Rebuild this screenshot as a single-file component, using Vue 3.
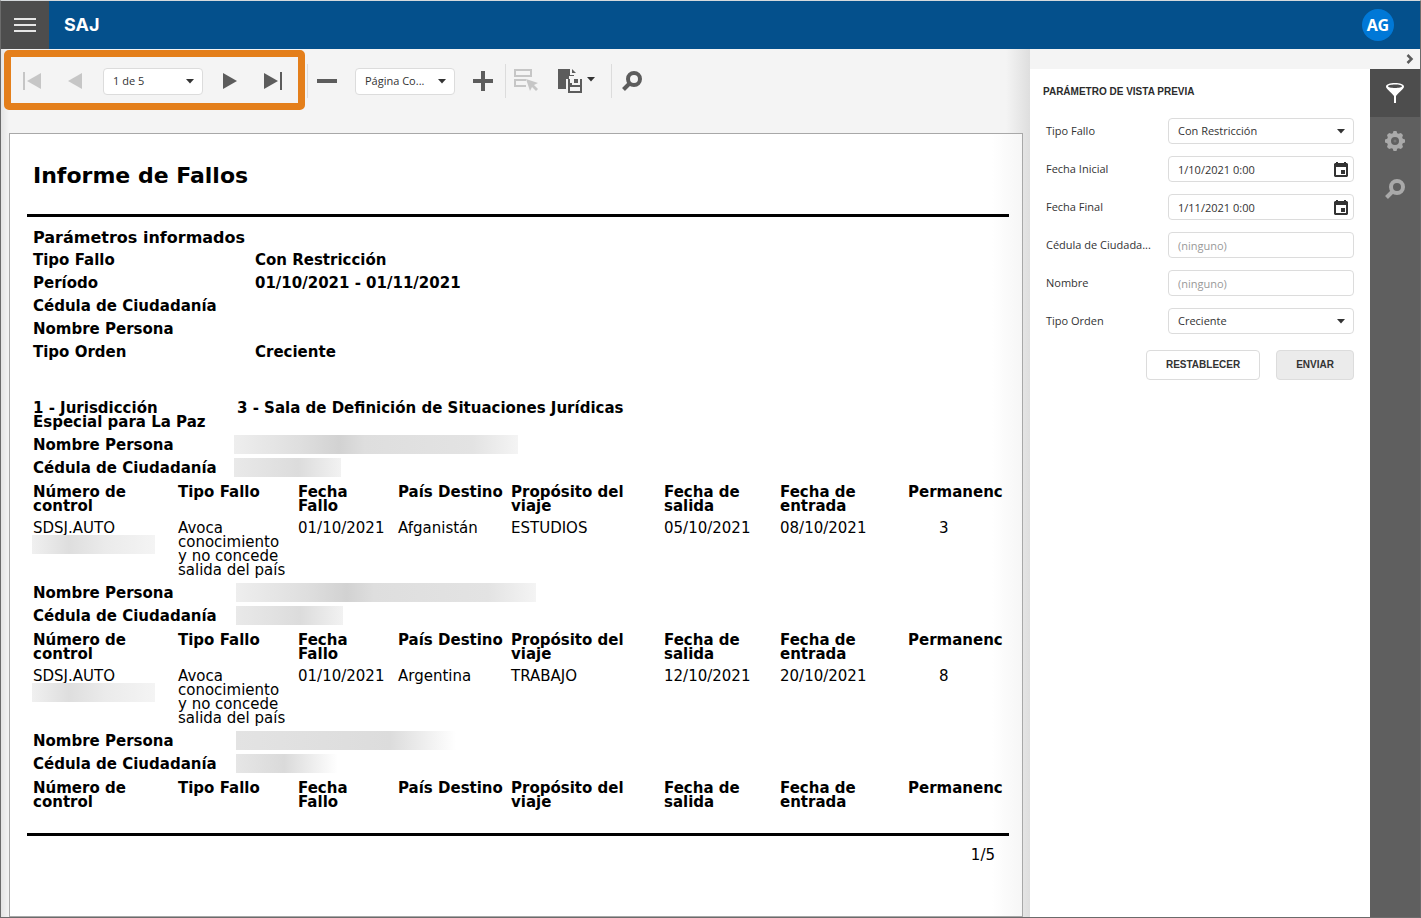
<script setup>
const columns = [
  { key: 'control', label: 'Número de control' },
  { key: 'ruling', label: 'Tipo Fallo' },
  { key: 'date', label: 'Fecha Fallo' },
  { key: 'country', label: 'País Destino' },
  { key: 'purpose', label: 'Propósito del viaje' },
  { key: 'leave', label: 'Fecha de salida' },
  { key: 'enter', label: 'Fecha de entrada' },
  { key: 'stay', label: 'Permanenc' }
]

const params = [
  ['Tipo Fallo', 'Con Restricción'],
  ['Período', '01/10/2021 - 01/11/2021'],
  ['Cédula de Ciudadanía', ''],
  ['Nombre Persona', ''],
  ['Tipo Orden', 'Creciente']
]

const ruling = 'Avoca conocimiento y no concede salida del país'
const people = [
  {
    mask: 'mask-a',
    row: { control: 'SDSJ.AUTO', ruling, date: '01/10/2021', country: 'Afganistán', purpose: 'ESTUDIOS', leave: '05/10/2021', enter: '08/10/2021', stay: '3' }
  },
  {
    mask: 'mask-b',
    row: { control: 'SDSJ.AUTO', ruling, date: '01/10/2021', country: 'Argentina', purpose: 'TRABAJO', leave: '12/10/2021', enter: '20/10/2021', stay: '8' }
  },
  { mask: 'mask-c', row: null }
]

const fields = [
  { id: 'tipo-fallo', label: 'Tipo Fallo', type: 'select', value: 'Con Restricción' },
  { id: 'fecha-inicial', label: 'Fecha Inicial', type: 'date', value: '1/10/2021 0:00' },
  { id: 'fecha-final', label: 'Fecha Final', type: 'date', value: '1/11/2021 0:00' },
  { id: 'cedula', label: 'Cédula de Ciudada...', type: 'text' },
  { id: 'nombre', label: 'Nombre', type: 'text' },
  { id: 'tipo-orden', label: 'Tipo Orden', type: 'select', value: 'Creciente' }
]
</script>

<template>
  <div class="app">
    <header class="topbar">
      <button class="menu" type="button" aria-label="Menú"><i></i><i></i><i></i></button>
      <strong class="brand">SAJ</strong>
      <button class="avatar" type="button">AG</button>
    </header>

    <div class="body">
      <main class="viewer">
        <div class="toolbar">
          <div class="highlight"></div>
          <div class="pager">
            <button class="tool off" type="button" aria-label="Primera página">
              <svg width="20" height="18" viewBox="0 0 20 18"><path d="M0 0h2v18H0zM18 1v16L4 9z" /></svg>
            </button>
            <button class="tool off" type="button" aria-label="Página anterior">
              <svg width="14" height="18" viewBox="0 0 14 18"><path d="M14 1v16L0 9z" /></svg>
            </button>
            <div class="pick">
              <select aria-label="Página"><option>1 de 5</option></select>
              <svg class="caret" width="8" height="5" viewBox="0 0 8 5"><path d="M0 0h8L4 4.500z" /></svg>
            </div>
            <button class="tool" type="button" aria-label="Página siguiente">
              <svg width="14" height="18" viewBox="0 0 14 18"><path d="M0 1v16L14 9z" /></svg>
            </button>
            <button class="tool" type="button" aria-label="Última página">
              <svg width="20" height="18" viewBox="0 0 20 18"><path d="M0 1v16L14 9zM16 0h2v18h-2z" /></svg>
            </button>
          </div>
          <span class="sep"></span>
          <div class="zoomer">
            <button class="tool" type="button" aria-label="Alejar">
              <svg width="20" height="20" viewBox="0 0 20 20"><path d="M0 8h20v4H0z" /></svg>
            </button>
            <div class="pick">
              <select aria-label="Zoom"><option>Página Co...</option></select>
              <svg class="caret" width="8" height="5" viewBox="0 0 8 5"><path d="M0 0h8L4 4.500z" /></svg>
            </div>
            <button class="tool" type="button" aria-label="Acercar">
              <svg width="20" height="20" viewBox="0 0 20 20"><path d="M8 0h4v8h8v4h-8v8H8v-8H0V8h8z" /></svg>
            </button>
          </div>
          <span class="sep"></span>
          <button class="tool off fieldsbtn" type="button" aria-label="Resaltar campos">
            <svg width="24" height="22" viewBox="0 0 24 22"><path fill-rule="evenodd" d="M0 0h18v8H0zM2 2v4h14V2zM0 10h12v2H2v4h10v2H0zM12 10l12 4-4 2 4 4-2 2-4-4-2 4z" /></svg>
          </button>
          <button class="tool exportbtn" type="button" aria-label="Exportar a">
            <svg width="24" height="24" viewBox="0 0 24 24"><path fill-rule="evenodd" d="M0 0h12v6h4v1h-5v3H8v10H0zM14 0l4 4h-4zM10 10h2v4h2v2h8v-6h2v14H10zM12 18v4h10v-4zM16 10h4v4h-4z" /></svg>
            <svg class="caret" width="8" height="5" viewBox="0 0 8 5"><path d="M0 0h8L4 4.500z" /></svg>
          </button>
          <span class="sep"></span>
          <button class="tool searchbtn" type="button" aria-label="Buscar">
            <svg width="20" height="20" viewBox="0 0 20 20"><circle cx="12" cy="8" r="6" fill="none" stroke="currentColor" stroke-width="4" /><path d="M8 12l-6.500 6.500" stroke="currentColor" stroke-width="4" /></svg>
          </button>
        </div>

        <article class="sheet">
          <h1>Informe de Fallos</h1>
          <section class="summary">
            <h2>Parámetros informados</h2>
            <dl>
              <div v-for="p in params" :key="p[0]"><dt>{{ p[0] }}</dt><dd>{{ p[1] }}</dd></div>
            </dl>
          </section>
          <div class="court">
            <span>1 - Jurisdicción Especial para La Paz</span>
            <span>3 - Sala de Definición de Situaciones Jurídicas</span>
          </div>
          <section v-for="p in people" :key="p.mask" :class="p.mask">
            <div class="who"><span>Nombre Persona</span><i class="mask name"></i></div>
            <div class="who"><span>Cédula de Ciudadanía</span><i class="mask card"></i></div>
            <table>
              <colgroup><col v-for="c in columns" :key="c.key" :class="'c-' + c.key" /></colgroup>
              <thead>
                <tr><th v-for="c in columns" :key="c.key" :class="c.key">{{ c.label }}</th></tr>
              </thead>
              <tbody v-if="p.row">
                <tr>
                  <td v-for="c in columns" :key="c.key" :class="c.key">
                    {{ p.row[c.key] }}<i v-if="c.key === 'control'" class="mask code"></i>
                  </td>
                </tr>
              </tbody>
            </table>
          </section>
          <footer>1/5</footer>
        </article>
      </main>

      <aside class="side">
        <div class="collapse">
          <button type="button" aria-label="Contraer panel">
            <svg width="8" height="10" viewBox="0 0 8 10"><path d="M1.500 1l4 4-4 4" fill="none" stroke="currentColor" stroke-width="2.500" /></svg>
          </button>
        </div>
        <div class="side-body">
          <form class="panel" @submit.prevent>
            <h3>PARÁMETRO DE VISTA PREVIA</h3>
            <div v-for="f in fields" :key="f.id" class="field">
              <label :for="f.id">{{ f.label }}</label>
              <div class="box">
                <template v-if="f.type === 'select'">
                  <select :id="f.id"><option>{{ f.value }}</option></select>
                  <svg class="caret" width="8" height="5" viewBox="0 0 8 5"><path d="M0 0h8L4 4.500z" /></svg>
                </template>
                <input v-else-if="f.type === 'text'" :id="f.id" type="text" placeholder="(ninguno)" />
                <template v-else>
                  <input :id="f.id" type="text" :value="f.value" />
                  <button class="cal" type="button" aria-label="Abrir calendario">
                    <svg width="14" height="15" viewBox="0 0 14 15"><path fill-rule="evenodd" d="M2 0h2v1h6V0h2v1h1l1 1v12l-1 1H1l-1-1V2l1-1h1zM2 5v8h10V5zM7 8h4v4H7z" /></svg>
                  </button>
                </template>
              </div>
            </div>
            <div class="actions">
              <button type="button">RESTABLECER</button>
              <button class="send" type="submit">ENVIAR</button>
            </div>
          </form>
          <nav class="tabs">
            <button class="on" type="button" aria-label="Parámetros">
              <svg width="20" height="20" viewBox="0 0 20 20"><path fill-rule="evenodd" d="M10 0c5 0 9 1.300 9 3.500 0 2.500-4 4.500-8 9.500v7H9v-7C5 8 1 6 1 3.500 1 1.300 5 0 10 0zM10 1.500C6 1.500 3 2.300 3 3.300S6 5 10 5s7-.7 7-1.700-3-1.800-7-1.800z" /></svg>
            </button>
            <button type="button" aria-label="Opciones de exportación">
              <svg width="20" height="20" viewBox="0 0 20 20"><path fill-rule="evenodd" d="M8.500 0h3l.7 2.200 1.300.6L15.900 2 18 4.100l-.8 2.400.6 1.300 2.200.7v3l-2.200.7-.6 1.300.8 2.400-2.100 2.100-2.400-.8-1.300.6-.7 2.200h-3l-.7-2.200-1.300-.6-2.400.8L2 15.900l.8-2.400-.6-1.300L0 11.500v-3l2.200-.7.6-1.300L2 4.100 4.100 2l2.400.8 1.300-.6zM10 6a4 4 0 1 0 0 8 4 4 0 0 0 0-8z" /><circle cx="10" cy="10" r="1.500" fill="#777" /></svg>
            </button>
            <button type="button" aria-label="Buscar en el documento">
              <svg width="20" height="20" viewBox="0 0 20 20"><circle cx="12" cy="8" r="6" fill="none" stroke="currentColor" stroke-width="4" /><path d="M8 12l-6.500 6.500" stroke="currentColor" stroke-width="4" /></svg>
            </button>
          </nav>
        </div>
      </aside>
    </div>
  </div>
</template>

<style>
body {
  margin: 0;
}
</style>

<style scoped>
* {
  box-sizing: border-box;
}
button,
select,
input {
  margin: 0;
  padding: 0;
  border: 0;
  background: none;
  color: inherit;
  font: inherit;
}
svg {
  display: block;
  fill: currentColor;
}
.app {
  display: flex;
  flex-direction: column;
  min-height: 100vh;
  border: 1px solid #6b6b6b;
  border-top-color: #d5d9dc;
  background: #f4f4f4;
  color: #333;
  font: 11px/16px "Open Sans", "Noto Sans", sans-serif;
}
.topbar {
  display: flex;
  align-items: center;
  height: 48px;
  background: #04508c;
  color: #fff;
}
.menu {
  display: flex;
  flex-direction: column;
  align-items: center;
  justify-content: center;
  gap: 4px;
  width: 48px;
  height: 48px;
  background: #4d4d4d;
}
.menu i {
  width: 22px;
  height: 2px;
  background: #e6e6e6;
}
.brand {
  flex: 1;
  padding-left: 15px;
  font: 700 18px/24px Inter, sans-serif;
}
.avatar {
  width: 32px;
  height: 32px;
  margin-right: 26px;
  border-radius: 50%;
  background: #0078d7;
  font: 700 16px/32px "Noto Sans", sans-serif;
}
.body {
  display: flex;
  flex: 1;
}
.viewer {
  display: flex;
  flex: 1;
  flex-direction: column;
  min-width: 0;
  padding: 0 7px 0 8px;
  background: linear-gradient(90deg, #e4e4e4, #f4f4f4 8px, #f4f4f4 calc(100% - 24px), #dedede);
}
.toolbar {
  position: relative;
  display: flex;
  align-items: center;
  height: 64px;
  margin-bottom: 20px;
  color: #5c5c5c;
}
.highlight {
  position: absolute;
  top: 1px;
  left: -5px;
  width: 301px;
  height: 60px;
  border: 7px solid #e47f1b;
  border-radius: 5px;
}
.pager,
.zoomer {
  display: flex;
  align-items: center;
}
.pager {
  gap: 20px;
  padding: 0 23px 0 14px;
}
.pager .tool:nth-child(2) {
  margin: 0 1px 0 5px;
}
.pager .tool:nth-child(5) {
  margin-left: 7px;
}
.off {
  color: #c6c6c6;
}
.sep {
  width: 1px;
  height: 34px;
  background: #dcdcdc;
}
.zoomer {
  gap: 18px;
  padding: 0 12px 0 9px;
}
.pick {
  display: flex;
  align-items: center;
  width: 100px;
  height: 27px;
  padding: 0 8px 0 9px;
  border: 1px solid #dcdcdc;
  border-radius: 4px;
  background: #fff;
  color: #333;
}
select {
  flex: 1;
  min-width: 0;
  appearance: none;
}
.pick select {
  height: 25px;
}
.fieldsbtn {
  padding: 0 20px 2px 8px;
}
.exportbtn {
  display: flex;
  align-items: center;
  gap: 5px;
  padding-right: 16px;
}
.exportbtn .caret {
  margin-bottom: 3px;
  color: #333;
}
.searchbtn {
  padding-left: 10px;
}
.sheet {
  flex: 1;
  padding: 27px 13px 48px 17px;
  border: 1px solid #a8a8a8;
  background: linear-gradient(90deg, #fff calc(100% - 30px), #f6f6f6);
  color: #000;
  font: 15px/14px "DejaVu Sans", sans-serif;
}
h1 {
  margin: 0;
  padding: 0 6px 23px;
  border-bottom: 3px solid #000;
  font: 700 22px/30px "DejaVu Sans", sans-serif;
}
.summary {
  padding: 10px 6px 37px;
  font-weight: 700;
}
h2 {
  margin: 0;
  font: 700 16px/22px "DejaVu Sans", sans-serif;
}
dl {
  margin: 0;
}
dl div {
  display: flex;
  line-height: 23px;
}
dt {
  width: 222px;
}
dd {
  margin: 0;
}
.court {
  display: flex;
  padding: 0 6px 4px;
  font-weight: 700;
}
.court span:first-child {
  width: 204px;
  padding-right: 20px;
}
.who {
  display: flex;
  align-items: center;
  height: 23px;
  padding-left: 6px;
  font-weight: 700;
}
.who span {
  width: 201px;
}
.mask {
  display: block;
  height: 19px;
}
.name {
  width: 284px;
  background: linear-gradient(90deg, #eee, #dedede 24%, #d2d2d2 37%, #dedede 46%, #e3e3e3 84%, #f4f4f4);
}
.card {
  width: 107px;
  background: linear-gradient(90deg, #e9e9e9, #dcdcdc 60%, #f2f2f2);
}
.mask-b .who span,
.mask-c .who span {
  width: 203px;
}
.mask-b .name {
  width: 300px;
}
.mask-c .name {
  width: 220px;
  background: linear-gradient(90deg, #e3e3e3, #dcdcdc 70%, #fff);
}
.mask-c .card {
  background: linear-gradient(90deg, #e6e6e6, #dadada 45%, #fff 95%);
}
.code {
  position: relative;
  width: 123px;
  margin-left: -1px;
  background: linear-gradient(90deg, #f0f0f0, #dedede 30%, #ebebeb 60%, #f4f4f4);
}
table {
  width: 100%;
  padding-right: 7px;
  border-spacing: 0;
  table-layout: fixed;
}
.c-control { width: 151px; }
.c-ruling { width: 120px; }
.c-date { width: 100px; }
.c-country { width: 113px; }
.c-purpose { width: 153px; }
.c-leave { width: 116px; }
.c-enter { width: 128px; }
th,
td {
  padding: 6px 8px 4px 0;
  text-align: left;
  vertical-align: top;
}
td {
  height: 64px;
  padding: 4px 8px 4px 0;
}
th.control,
td.control {
  padding-left: 6px;
}
th.stay {
  padding-right: 0;
  white-space: nowrap;
}
td.stay {
  padding-left: 31px;
}
footer {
  margin-top: 20px;
  padding: 12px 14px 0;
  border-top: 3px solid #000;
  text-align: right;
}
.side {
  display: flex;
  flex-direction: column;
  width: 390px;
  background: #fff;
}
.collapse {
  display: flex;
  align-items: center;
  justify-content: flex-end;
  height: 20px;
  padding-right: 6px;
  background: #f4f4f4;
  color: #5c5c5c;
}
.side-body {
  display: flex;
  flex: 1;
}
.panel {
  flex: 1;
  padding: 15px 16px 0 13px;
}
h3 {
  margin: 0 0 18px;
  color: #2b2b2b;
  font: 700 10px/16px "Liberation Sans", sans-serif;
}
.field {
  display: flex;
  align-items: center;
  margin-bottom: 12px;
  padding-left: 3px;
}
.field label {
  width: 122px;
}
.box {
  display: flex;
  flex: 1;
  align-items: center;
  min-width: 0;
  height: 26px;
  padding: 0 8px 0 9px;
  border: 1px solid #dcdcdc;
  border-radius: 4px;
}
.box input,
.box select {
  flex: 1;
  min-width: 0;
  height: 24px;
}
.box input::placeholder {
  color: #999;
  opacity: 1;
}
.cal {
  margin-right: -3px;
}
.actions {
  display: flex;
  justify-content: flex-end;
  gap: 16px;
  padding-top: 4px;
}
.actions button {
  height: 30px;
  padding: 0 19px;
  border: 1px solid #dcdcdc;
  border-radius: 4px;
  font: 700 10px/16px "Liberation Sans", sans-serif;
}
.actions .send {
  background: #ebebeb;
}
.tabs {
  width: 50px;
  background: #5f5f5f;
  color: #a9a9a9;
}
.tabs button {
  display: flex;
  align-items: center;
  justify-content: center;
  width: 50px;
  height: 48px;
}
.tabs .on {
  background: #4d4d4d;
  color: #fff;
}
</style>
